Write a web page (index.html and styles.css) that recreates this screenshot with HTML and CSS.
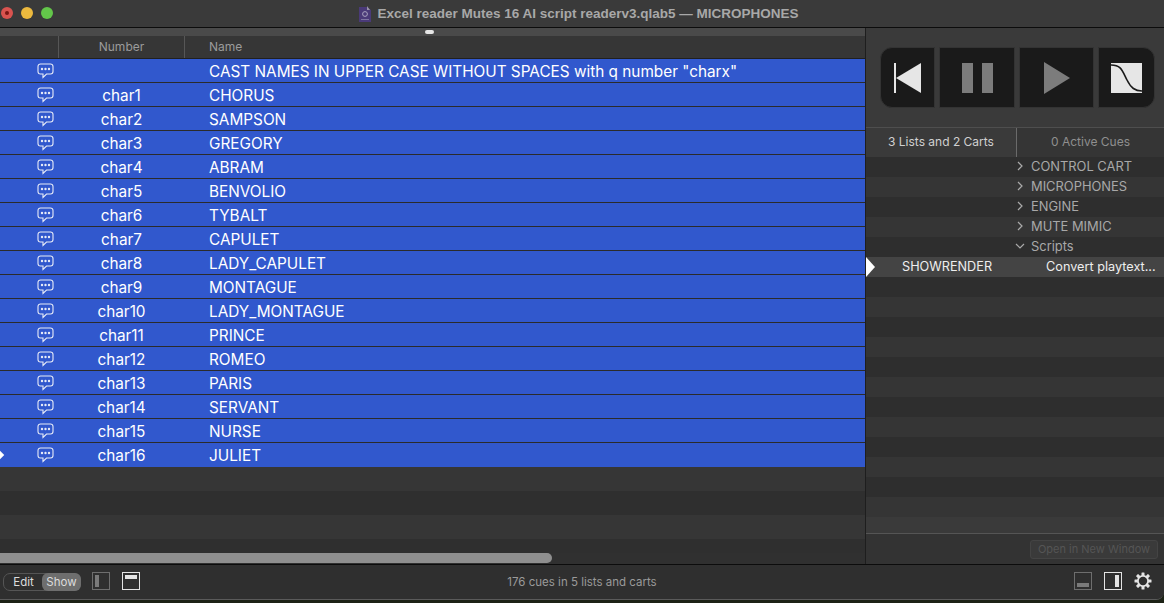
FILE: index.html
```html
<!DOCTYPE html>
<html lang="en">
<head>
<meta charset="utf-8">
<title>QLab</title>
<link rel="stylesheet" href="styles.css">
</head>
<body>
<div class="window">
  <header class="titlebar">
    <div class="lights"><span class="light red"><span class="dot"></span></span><span class="light yellow"></span><span class="light green"></span></div>
    <div class="title">
      <svg class="docicon" width="12" height="16" viewBox="0 0 12 16"><path d="M0 1h8l4 3v12H0z" fill="#4a3a78"/><path d="M8 0v4h3z" fill="#9a94a8"/><circle cx="6" cy="8" r="2.4" fill="none" stroke="#a9a3c0" stroke-width="1"/><rect x="2" y="13" width="8" height="1" fill="#7d74a0"/></svg>
      <span>Excel reader Mutes 16 AI script readerv3.qlab5 — MICROPHONES</span>
    </div>
  </header>
  <main class="body">
    <section class="workspace">
      <div class="dragstrip"><span class="handle"></span></div>
      <div class="thead">
        <div class="c-icon"></div>
        <div class="c-num th">Number</div>
        <div class="c-name th">Name</div>
      </div>
      <div class="rows">
        <div class="row"><div class="c-icon"><svg class="bubble" width="17" height="16" viewBox="0 0 17 16"><use href="#b"/></svg></div><div class="c-num"></div><div class="c-name">CAST NAMES IN UPPER CASE WITHOUT SPACES with q number "charx"</div></div>
        <div class="row"><div class="c-icon"><svg class="bubble" width="17" height="16" viewBox="0 0 17 16"><use href="#b"/></svg></div><div class="c-num">char1</div><div class="c-name">CHORUS</div></div>
        <div class="row"><div class="c-icon"><svg class="bubble" width="17" height="16" viewBox="0 0 17 16"><use href="#b"/></svg></div><div class="c-num">char2</div><div class="c-name">SAMPSON</div></div>
        <div class="row"><div class="c-icon"><svg class="bubble" width="17" height="16" viewBox="0 0 17 16"><use href="#b"/></svg></div><div class="c-num">char3</div><div class="c-name">GREGORY</div></div>
        <div class="row"><div class="c-icon"><svg class="bubble" width="17" height="16" viewBox="0 0 17 16"><use href="#b"/></svg></div><div class="c-num">char4</div><div class="c-name">ABRAM</div></div>
        <div class="row"><div class="c-icon"><svg class="bubble" width="17" height="16" viewBox="0 0 17 16"><use href="#b"/></svg></div><div class="c-num">char5</div><div class="c-name">BENVOLIO</div></div>
        <div class="row"><div class="c-icon"><svg class="bubble" width="17" height="16" viewBox="0 0 17 16"><use href="#b"/></svg></div><div class="c-num">char6</div><div class="c-name">TYBALT</div></div>
        <div class="row"><div class="c-icon"><svg class="bubble" width="17" height="16" viewBox="0 0 17 16"><use href="#b"/></svg></div><div class="c-num">char7</div><div class="c-name">CAPULET</div></div>
        <div class="row"><div class="c-icon"><svg class="bubble" width="17" height="16" viewBox="0 0 17 16"><use href="#b"/></svg></div><div class="c-num">char8</div><div class="c-name">LADY_CAPULET</div></div>
        <div class="row"><div class="c-icon"><svg class="bubble" width="17" height="16" viewBox="0 0 17 16"><use href="#b"/></svg></div><div class="c-num">char9</div><div class="c-name">MONTAGUE</div></div>
        <div class="row"><div class="c-icon"><svg class="bubble" width="17" height="16" viewBox="0 0 17 16"><use href="#b"/></svg></div><div class="c-num">char10</div><div class="c-name">LADY_MONTAGUE</div></div>
        <div class="row"><div class="c-icon"><svg class="bubble" width="17" height="16" viewBox="0 0 17 16"><use href="#b"/></svg></div><div class="c-num">char11</div><div class="c-name">PRINCE</div></div>
        <div class="row"><div class="c-icon"><svg class="bubble" width="17" height="16" viewBox="0 0 17 16"><use href="#b"/></svg></div><div class="c-num">char12</div><div class="c-name">ROMEO</div></div>
        <div class="row"><div class="c-icon"><svg class="bubble" width="17" height="16" viewBox="0 0 17 16"><use href="#b"/></svg></div><div class="c-num">char13</div><div class="c-name">PARIS</div></div>
        <div class="row"><div class="c-icon"><svg class="bubble" width="17" height="16" viewBox="0 0 17 16"><use href="#b"/></svg></div><div class="c-num">char14</div><div class="c-name">SERVANT</div></div>
        <div class="row"><div class="c-icon"><svg class="bubble" width="17" height="16" viewBox="0 0 17 16"><use href="#b"/></svg></div><div class="c-num">char15</div><div class="c-name">NURSE</div></div>
        <div class="row row-end"><span class="playhead"></span><div class="c-icon"><svg class="bubble" width="17" height="16" viewBox="0 0 17 16"><use href="#b"/></svg></div><div class="c-num">char16</div><div class="c-name">JULIET</div></div>
      </div>
      <div class="emptyrows"><div class="erow"></div><div class="erow dark"></div><div class="erow"></div><div class="erow dark short"></div></div>
      <div class="scrolltrack"><div class="thumb"></div></div>
    </section>
    <aside class="side">
      <div class="transport">
        <div class="tbtn t-go"><svg width="28" height="30" viewBox="0 0 28 30"><rect x="0" y="0" width="2" height="30" fill="#e6e6e6"/><path d="M27 0v30L2 15z" fill="#e6e6e6"/></svg></div>
        <div class="tbtn t-pause"><svg width="31" height="30" viewBox="0 0 31 30"><rect x="0" y="0" width="11" height="30" fill="#7c7c7c"/><rect x="20" y="0" width="11" height="30" fill="#7c7c7c"/></svg></div>
        <div class="tbtn t-play"><svg width="26" height="32" viewBox="0 0 26 32"><path d="M0 0v32l26-16z" fill="#7c7c7c"/></svg></div>
        <div class="tbtn t-fade"><svg width="31" height="30" viewBox="0 0 31 30"><rect width="31" height="30" fill="#e6e6e6"/><path d="M0 2c10 0 11 5 16 15 4 8 8 11 15 11" fill="none" stroke="#1a1a1a" stroke-width="1.6"/></svg></div>
      </div>
      <div class="tabs"><div class="tab active">3 Lists and 2 Carts</div><div class="tab">0 Active Cues</div></div>
      <div class="lists">
        <div class="lrow dark"><svg class="chev" width="8" height="10" viewBox="0 0 8 10"><path d="M2 1l4 4-4 4" fill="none" stroke="#aaa" stroke-width="1.2"/></svg><span>CONTROL CART</span></div>
        <div class="lrow"><svg class="chev" width="8" height="10" viewBox="0 0 8 10"><path d="M2 1l4 4-4 4" fill="none" stroke="#aaa" stroke-width="1.2"/></svg><span>MICROPHONES</span></div>
        <div class="lrow dark"><svg class="chev" width="8" height="10" viewBox="0 0 8 10"><path d="M2 1l4 4-4 4" fill="none" stroke="#aaa" stroke-width="1.2"/></svg><span>ENGINE</span></div>
        <div class="lrow"><svg class="chev" width="8" height="10" viewBox="0 0 8 10"><path d="M2 1l4 4-4 4" fill="none" stroke="#aaa" stroke-width="1.2"/></svg><span>MUTE MIMIC</span></div>
        <div class="lrow dark"><svg class="chev open" width="10" height="8" viewBox="0 0 10 8"><path d="M1 2l4 4 4-4" fill="none" stroke="#aaa" stroke-width="1.2"/></svg><span>Scripts</span></div>
        <div class="lrow current"><span class="marker"></span><span class="cnum">SHOWRENDER</span><span class="cname">Convert playtext...</span></div>
        <div class="lrow dark"></div><div class="lrow"></div><div class="lrow dark"></div><div class="lrow"></div><div class="lrow dark"></div><div class="lrow"></div><div class="lrow dark"></div><div class="lrow"></div><div class="lrow dark"></div><div class="lrow"></div><div class="lrow dark"></div><div class="lrow"></div>
      </div>
      <div class="openbar"><div class="openbtn">Open in New Window</div></div>
    </aside>
  </main>
  <footer class="footer">
    <div class="footleft">
      <div class="seg"><span class="segitem">Edit</span><span class="segitem on">Show</span></div>
      <svg class="ficon" width="18" height="18" viewBox="0 0 18 18"><rect x=".5" y=".5" width="17" height="17" fill="none" stroke="#6e6e6e"/><rect x="3" y="3" width="4" height="12" fill="#7a7a7a"/></svg>
      <svg class="ficon" width="18" height="18" viewBox="0 0 18 18"><rect x=".5" y=".5" width="17" height="17" fill="none" stroke="#e4e4e4"/><rect x="3" y="3" width="12" height="4" fill="#e4e4e4"/></svg>
    </div>
    <div class="status">176 cues in 5 lists and carts</div>
    <div class="footright">
      <svg width="18" height="18" viewBox="0 0 18 18"><rect x=".5" y=".5" width="17" height="17" fill="none" stroke="#6e6e6e"/><rect x="3" y="11" width="12" height="4" fill="#7a7a7a"/></svg>
      <svg width="18" height="18" viewBox="0 0 18 18"><rect x=".5" y=".5" width="17" height="17" fill="none" stroke="#e4e4e4"/><rect x="11" y="3" width="4" height="12" fill="#e4e4e4"/></svg>
      <svg width="18" height="18" viewBox="0 0 18 18"><g fill="#e4e4e4"><rect x="7.5" y="0.5" width="3" height="17" rx=".5"/><rect x="7.5" y="0.5" width="3" height="17" rx=".5" transform="rotate(45 9 9)"/><rect x="7.5" y="0.5" width="3" height="17" rx=".5" transform="rotate(90 9 9)"/><rect x="7.5" y="0.5" width="3" height="17" rx=".5" transform="rotate(135 9 9)"/></g><circle cx="9" cy="9" r="6" fill="#e4e4e4"/><circle cx="9" cy="9" r="4.2" fill="#2e2e2e"/></svg>
    </div>
  </footer>
</div>
<svg class="defs" width="0" height="0"><defs><g id="b"><path d="M3.500 1h10A2.500 2.500 0 0 1 16 3.500v5A2.500 2.500 0 0 1 13.500 11H9.500L6 14.500V11H3.500A2.500 2.500 0 0 1 1 8.500v-5A2.500 2.500 0 0 1 3.500 1z" fill="none" stroke="#e8ecf8" stroke-width="1.100"/><circle cx="5" cy="6" r="1.200" fill="#e8ecf8"/><circle cx="8.500" cy="6" r="1.200" fill="#e8ecf8"/><circle cx="12" cy="6" r="1.200" fill="#e8ecf8"/></g></defs></svg>
</body>
</html>
```
FILE: styles.css
```css
* { box-sizing: border-box; }
html, body { margin: 0; padding: 0; height: 100%; overflow: hidden; background: #1c2216; }
body { font-family: "Inter", "Liberation Sans", sans-serif; color: #fff; }
.window { height: 600px; width: 1164px; display: flex; flex-direction: column; background: #2f2f2f; border-bottom: 1px solid #5a5a5a; border-bottom-right-radius: 8px; overflow: hidden; }
.defs { position: absolute; }

.titlebar { height: 28px; flex: none; position: relative; display: flex; justify-content: center; align-items: center; background: #3a3a3a; border-bottom: 1px solid #0c0c0c; }
.lights { position: absolute; left: 1px; top: 7px; display: flex; gap: 8px; }
.light { width: 12px; height: 12px; border-radius: 50%; display: flex; align-items: center; justify-content: center; }
.red { background: #d9534f; }
.dot { width: 4px; height: 4px; border-radius: 50%; background: #7a1512; }
.yellow { background: #ecb93e; }
.green { background: #63c64a; }
.title { display: flex; align-items: center; gap: 6px; padding-right: 6px; font: 700 13.500px "Liberation Sans", Arial, sans-serif; color: #a8a8a8; }

.body { flex: 1; display: flex; min-height: 0; }
.workspace { width: 866px; flex: none; display: flex; flex-direction: column; border-right: 1px solid #1e1e1e; background: #2f2f2f; }
.dragstrip { height: 8px; flex: none; background: #4a4a4a; display: flex; justify-content: center; }
.handle { width: 9px; height: 4px; margin: 2px 0 0 -6px; border-radius: 2px; background: #e6e6e6; }
.thead { height: 23px; flex: none; display: flex; background: #363636; border-bottom: 1px solid #202020; font-size: 12px; color: #9b9b9b; align-items: stretch; }
.th { display: flex; align-items: center; border-left: 1px solid #575757; padding-bottom: 2px; }
.c-icon { width: 58px; flex: none; display: flex; align-items: center; }
.c-num { width: 127px; flex: none; text-align: center; }
.c-name { flex: 1; padding-left: 24px; white-space: nowrap; }
.thead .c-num { width: 126px; justify-content: center; }
.thead .c-name { padding-left: 24px; }
.rows { flex: none; }
.row { height: 24px; display: flex; align-items: center; background: #3158cd; border-bottom: 1px solid #2b2b2b; font-size: 15.330px; position: relative; padding-top: 2px; }
.row-end { border-bottom: 0; padding-bottom: 1px; }
.bubble { margin-left: 37px; margin-top: -1px; }
.playhead { position: absolute; left: -3px; top: 9px; width: 6px; height: 6px; background: #fff; transform: rotate(45deg); }

.emptyrows { flex: 1; min-height: 0; display: flex; flex-direction: column; }
.erow { height: 24px; flex: none; background: #363636; }
.erow.dark { background: #2f2f2f; }
.erow.short { height: 14px; }
.scrolltrack { height: 11px; flex: none; background: #303030; }
.thumb { width: 552px; height: 10px; background: #8f8f8f; border-radius: 0 5px 5px 0; }

.side { flex: 1; display: flex; flex-direction: column; background: #3a3a3a; min-width: 0; }
.transport { height: 99px; flex: none; display: flex; padding: 19px 9px 0 14px; gap: 4px; }
.tbtn { background: #1a1a1a; border: 1px solid #333; display: flex; align-items: center; justify-content: center; height: 61px; }
.t-go { width: 55px; border-radius: 12px 0 0 12px; justify-content: flex-start; padding-left: 13px; }
.t-pause { width: 76px; }
.t-play { width: 75px; }
.t-fade { flex: 1; border-radius: 0 12px 12px 0; }

.tabs { height: 30px; flex: none; display: flex; font-size: 12px; color: #8f8f8f; border-top: 1px solid #4e4e4e; }
.tab { flex: 1; display: flex; align-items: center; justify-content: center; background: #353535; padding-bottom: 2px; }
.tab.active { width: 151px; flex: none; background: #3a3a3a; color: #d0d0d0; border-right: 1px solid #6a6a6a; }

.lists { flex: 1; min-height: 0; overflow: hidden; }
.lrow { height: 20px; display: flex; align-items: center; padding: 0 0 2px 150px; font-size: 12.900px; color: #a8a8a8; background: #353535; position: relative; }
.lrow.dark { background: #2e2e2e; }
.chev { margin-right: 7px; flex: none; }
.chev.open { margin-left: -1px; margin-right: 6px; }
.lrow.current { background: #444; color: #eee; padding-left: 0; font-size: 12.700px; }
.marker { position: absolute; left: 0; top: 0; width: 0; height: 0; border-left: 9px solid #fff; border-top: 10px solid transparent; border-bottom: 10px solid transparent; }
.cnum { margin-left: 36px; width: 144px; }
.cname { white-space: nowrap; }

.openbar { height: 31px; flex: none; display: flex; justify-content: flex-end; align-items: center; padding-right: 6px; border-top: 1px solid #555; background: #333; }
.openbtn { width: 128px; height: 19px; display: flex; align-items: center; justify-content: center; border: 1px solid #444; border-radius: 3px; background: #3a3a3a; font-size: 11px; color: #555; }

.footer { height: 35px; flex: none; display: flex; align-items: center; justify-content: space-between; background: #2f2f2f; border-top: 1px solid #0c0c0c; position: relative; padding: 0 12px 1px 3px; }
.footleft { display: flex; align-items: center; }
.seg { display: flex; height: 18px; width: 78px; border: 1px solid #555; border-radius: 7px; font-size: 11.500px; color: #ddd; }
.segitem { flex: 1; display: flex; align-items: center; justify-content: center; }
.segitem.on { background: #6e6e6e; border-radius: 6px; margin: -1px; }
.ficon { margin: -2px 0 0 12px; }
.ficon:first-of-type { margin-left: 11px; }
.status { position: absolute; left: 0; right: 0; text-align: center; font-size: 11.500px; color: #9a9a9a; pointer-events: none; }
.footright { display: flex; gap: 12px; align-items: center; margin-top: -2px; }
```
